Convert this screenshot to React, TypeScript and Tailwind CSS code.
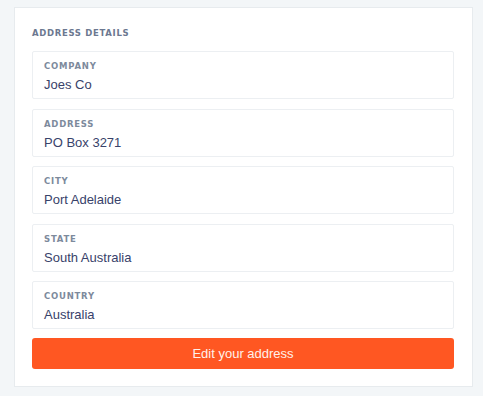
const fields = [
  { label: "Company", value: "Joes Co" },
  { label: "Address", value: "PO Box 3271" },
  { label: "City", value: "Port Adelaide" },
  { label: "State", value: "South Australia" },
  { label: "Country", value: "Australia" },
];

function Field({ label, value }: { label: string; value: string }) {
  return (
    <div className="flex h-[48px] flex-col rounded-[2px] border border-[#eceff2] bg-white px-[11px] pt-[8px]">
      <span className="font-['DejaVu_Sans'] text-[8.5px] font-bold uppercase leading-[12px] tracking-[0.09em] text-[#7d8a9c]">
        {label}
      </span>
      <span className="mt-[5px] font-['Liberation_Sans'] text-[13px] leading-[16px] text-[#38426a]">{value}</span>
    </div>
  );
}

export default function App() {
  return (
    <div className="h-[396px] w-[483px] bg-[#f3f6f8] pl-[14px] pt-[7px]">
      <div className="h-[380px] w-[459px] border border-[#e7ebee] bg-white pl-[17px] pr-[18px] pt-[19px]">
        <h2 className="font-['DejaVu_Sans'] text-[8.5px] font-bold uppercase leading-[12px] tracking-[0.08em] text-[#6c7890]">
          Address details
        </h2>
        <div className="mt-[12px] flex flex-col gap-[9.5px]">
          {fields.map((f) => (
            <Field key={f.label} label={f.label} value={f.value} />
          ))}
        </div>
        <button className="mt-[9px] flex h-[31px] w-full items-center justify-center rounded-[3px] bg-[#ff5722] font-['Liberation_Sans'] text-[13px] text-[#fff1ea]">
          Edit your address
        </button>
      </div>
    </div>
  );
}
